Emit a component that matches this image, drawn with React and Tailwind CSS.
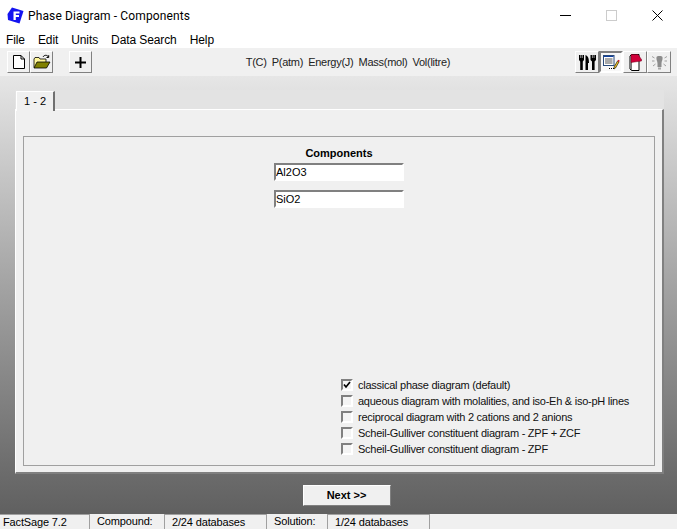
const bevelUp = 'border border-t-white border-l-white border-r-[#808080] border-b-[#808080]';
const sunken = 'border-2 border-t-[#808080] border-l-[#808080] border-r-white border-b-white';

const menus = ['File', 'Edit', 'Units', 'Data Search', 'Help'];
const units = ['T(C)', 'P(atm)', 'Energy(J)', 'Mass(mol)', 'Vol(litre)'];
const options = [
  'classical phase diagram (default)',
  'aqueous diagram with molalities, and iso-Eh & iso-pH lines',
  'reciprocal diagram with 2 cations and 2 anions',
  'Scheil-Gulliver constituent diagram - ZPF + ZCF',
  'Scheil-Gulliver constituent diagram - ZPF',
];

const ToolButton = ({ children, pressed, className = '' }) => (
  <button
    className={`h-[22px] flex items-center justify-center ${
      pressed ? 'bg-[#f8f8f8] border-2 border-t-[#808080] border-l-[#808080] border-r-white border-b-white' : `bg-[#f0f0f0] ${bevelUp}`
    } ${className}`}
  >
    {children}
  </button>
);

const Logo = () => (
  <svg width="17" height="17" viewBox="0 0 17 17">
    <path d="M5 0.5 L16.5 4 L12.5 16.5 L1 13 L0.5 7 Z" fill="#1414f0" />
    <path d="M6.5 4.5 H12.5 V6.5 H8.8 V8 H12 V10 H8.8 V13 H6.5 Z" fill="#fff" />
  </svg>
);

const NewIcon = () => (
  <svg width="14" height="16" viewBox="0 0 14 16">
    <path d="M1.5 1.5 H9 L12.5 5 V14.5 H1.5 Z" fill="#fff" stroke="#000" />
    <path d="M9 1.5 V5 H12.5" fill="none" stroke="#000" />
  </svg>
);

const OpenIcon = () => (
  <svg width="18" height="16" viewBox="0 0 18 16">
    <path d="M1 5 L2 3.5 H6 L7 5 H13 V13.5 H1 Z" fill="#fff79a" stroke="#000" strokeWidth="0.8" />
    <path d="M1 14 L4 8 H17 L13.5 14 Z" fill="#808000" stroke="#000" strokeWidth="0.8" />
    <path d="M10 3 C11 1 14 0.5 15.5 3 M15.7 1.2 V3.5 H13.5" fill="none" stroke="#000" />
  </svg>
);

const PlusIcon = () => (
  <svg width="13" height="13" viewBox="0 0 13 13">
    <path d="M6.5 1 V12 M1 6.5 H12" stroke="#000" strokeWidth="2" />
  </svg>
);

const ForkIcon = () => (
  <svg width="17" height="15" viewBox="0 0 17 15">
    <path d="M0 0 H5 V5 L3.8 6.5 V15 H1.2 V6.5 L0 5 Z" fill="#000" />
    <path d="M6.5 15 V0 C9 1 10 3 10 8 H9 V15 Z" fill="#000" />
    <path d="M11.5 0 H17 V5 L15.6 6.5 V15 H13 V6.5 L11.5 5 Z" fill="#000" />
    <path d="M1.7 0 V3 M3.3 0 V3 M13.4 0 V3 M15.1 0 V3" stroke="#f0f0f0" strokeWidth="0.6" />
  </svg>
);

const FormIcon = () => (
  <svg width="17" height="15" viewBox="0 0 17 15">
    <rect x="0.5" y="0.5" width="10.5" height="10" fill="#fff" stroke="#2a4a7a" />
    <path d="M1 1.5 H10.5" stroke="#1040a0" />
    <path d="M2 4 H9.5 M2 6 H9.5 M2 8 H9.5" stroke="#555" />
    <path d="M6 13.5 H7 M8 13.5 H9 M10 13.5 H11" stroke="#000" />
    <path d="M11 12 L14.5 6 L16 7 L12.5 13 L11 14 Z" fill="#f0c020" stroke="#000" strokeWidth="0.6" />
    <path d="M14.5 6 L15.3 4.7 L16.8 5.7 L16 7 Z" fill="#d01020" />
  </svg>
);

const BookIcon = () => (
  <svg width="13" height="17" viewBox="0 0 13 17">
    <path d="M1 2 L2.5 0.5 H10 V16.5 H2.5 L1 15 Z" fill="#fff" stroke="#000" />
    <path d="M2.5 8 V16" stroke="#777" />
    <path d="M2 0.5 H9 L12.5 5.5 V7 L2 8.5 Z" fill="#d0003a" stroke="#70001c" strokeWidth="0.5" />
  </svg>
);

const BulbIcon = () => (
  <svg width="15" height="15" viewBox="0 0 15 15">
    <path d="M4.5 2 C4.5 0.5 10.5 0.5 10.5 2 C11 5 9.5 6 9.5 8.5 V12 H5.5 V8.5 C5.5 6 4 5 4.5 2 Z" fill="#8c8c8c" />
    <path d="M6 12.5 H9 V14.5 H6 Z" fill="#a8a8a8" />
    <path d="M0 1.5 L2.5 3 M15 1.5 L12.5 3 M0 6 H2.5 M12.5 6 H15 M1 11 L3.5 9 M14 11 L11.5 9" stroke="#a0a0a0" />
  </svg>
);

const TitleBar = () => (
  <div className="h-[31px] bg-white flex items-center pl-[7px] shrink-0">
    <Logo />
    <span className="ml-[4px] text-[12px] text-black font-['Roboto',sans-serif] tracking-[0.12px]">
      Phase Diagram - Components
    </span>
    <div className="ml-auto flex items-center h-full">
      <svg width="11" height="11" viewBox="0 0 11 11" className="mr-[35px]">
        <path d="M0 5.5 H11" stroke="#000" />
      </svg>
      <svg width="11" height="11" viewBox="0 0 11 11" className="mr-[35px]">
        <rect x="0.5" y="0.5" width="10" height="10" fill="none" stroke="#ccc" />
      </svg>
      <svg width="11" height="11" viewBox="0 0 11 11" className="mr-[14px]">
        <path d="M0.5 0.5 L10.5 10.5 M10.5 0.5 L0.5 10.5" stroke="#000" />
      </svg>
    </div>
  </div>
);

const MenuBar = () => (
  <div className="h-[17px] bg-white flex items-center pl-[6px] gap-[13px] text-[12px] tracking-[-0.1px] text-black shrink-0">
    {menus.map((m) => (
      <span key={m}>{m}</span>
    ))}
  </div>
);

const ToolBar = () => (
  <div className="h-[28px] bg-[#f0f0f0] flex items-center pl-[7px] pr-[6px] shrink-0">
    <ToolButton className="w-[23px]"><NewIcon /></ToolButton>
    <ToolButton className="w-[23px]"><OpenIcon /></ToolButton>
    <ToolButton className="w-[23px] ml-[16px]"><PlusIcon /></ToolButton>
    <div className="flex-1 flex justify-center gap-[5px] text-[11px] tracking-[-0.26px] text-[#222] pl-[29px]">
      {units.map((u) => (
        <span key={u}>{u}</span>
      ))}
    </div>
    <ToolButton className="w-[24px]"><ForkIcon /></ToolButton>
    <ToolButton className="w-[24px]" pressed><FormIcon /></ToolButton>
    <ToolButton className="w-[24px]"><BookIcon /></ToolButton>
    <ToolButton className="w-[24px]"><BulbIcon /></ToolButton>
  </div>
);

const ComponentInput = ({ value }) => (
  <input
    readOnly
    value={value}
    className={`w-[130px] h-[18px] bg-white px-0 text-[11px] text-black outline-none ${sunken}`}
  />
);

const OptionRow = ({ label, checked }) => (
  <div className="h-[16px] flex items-center gap-[5px]">
    <div className={`w-[12px] h-[12px] bg-[#f4f4f4] flex items-center justify-center ${sunken}`}>
      {checked && (
        <svg width="8" height="8" viewBox="0 0 8 8">
          <path d="M1 3.5 L3 6 L7 1" fill="none" stroke="#000" strokeWidth="1.7" />
        </svg>
      )}
    </div>
    <span className="text-[11px] tracking-[-0.26px] text-[#111]">{label}</span>
  </div>
);

const TabPanel = () => (
  <div className="ml-[15px] mr-[13px] mt-[14px] h-[384px] flex flex-col">
    <div className="h-[19px] bg-[#e3e3e3] flex shrink-0 pl-[1px]">
      <div className="w-[39px] h-[20px] mt-[1px] z-10 bg-[#f0f0f0] border-t border-l border-white border-r-2 border-r-[#707070] flex items-center justify-center text-[11px] text-black">
        1 - 2
      </div>
    </div>
    <div className="flex-1 min-h-0 bg-[#f0f0f0] border-t border-l border-white border-r-2 border-r-[#808080] border-b-2 border-b-[#808080] pl-[7px] pr-[7px] pt-[26px] pb-[6px]">
      <div className="h-full border border-[#a0a0a0] flex flex-col items-center pt-[9px] pb-[8px]">
        <div className="text-[11px] font-bold text-black leading-[14px]">Components</div>
        <div className="mt-[3px] flex flex-col gap-[9px]">
          <ComponentInput value="Al2O3" />
          <ComponentInput value="SiO2" />
        </div>
        <div className="mt-auto self-start ml-[317px] flex flex-col">
          {options.map((o, i) => (
            <OptionRow key={o} label={o} checked={i === 0} />
          ))}
        </div>
      </div>
    </div>
  </div>
);

const StatusBar = () => (
  <div className="h-[15px] bg-[#f0f0f0] flex text-[11px] tracking-[-0.15px] text-black shrink-0 leading-[14px] overflow-hidden">
    <div className="w-[90px] pl-[3px] border-t border-[#a0a0a0] border-r border-r-[#a0a0a0]">FactSage 7.2</div>
    <div className="w-[74px] pl-[7px]">Compound:</div>
    <div className="w-[103px] pl-[7px] border-t border-l border-r border-[#a0a0a0]">2/24 databases</div>
    <div className="w-[60px] pl-[7px]">Solution:</div>
    <div className="w-[103px] pl-[7px] border-t border-l border-r border-[#a0a0a0]">1/24 databases</div>
  </div>
);

export default function App() {
  return (
    <div className="w-[677px] h-[529px] flex flex-col overflow-hidden font-['Liberation_Sans',Arial,sans-serif]">
      <TitleBar />
      <MenuBar />
      <ToolBar />
      <div className="flex-1 flex flex-col bg-gradient-to-b from-[#e6e6e6] to-[#606060]">
        <TabPanel />
        <div className="flex justify-center mt-[11px] pl-[16px]">
          <button className={`w-[88px] h-[21px] bg-[#f0f0f0] text-[11px] font-bold text-black ${bevelUp}`}>
            Next &gt;&gt;
          </button>
        </div>
      </div>
      <StatusBar />
    </div>
  );
}
